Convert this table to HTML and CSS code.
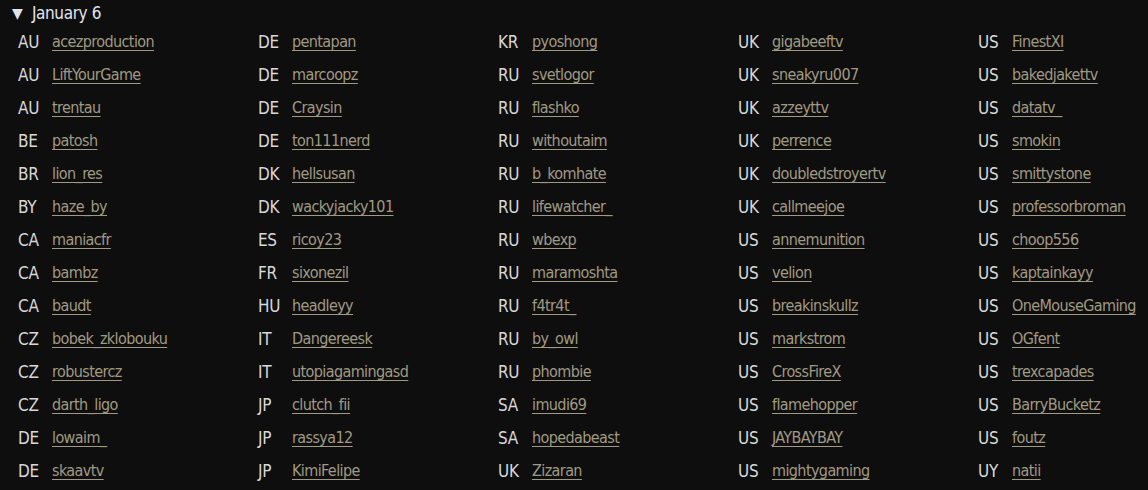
FILE: index.html
```html
<!DOCTYPE html>
<html>
<head>
<meta charset="utf-8">
<link rel="stylesheet" href="styles.css">
</head>
<body>
<details class="day" open>
<summary class="day-title"><span class="caret">▼</span>January 6</summary>
<ul class="list">
<li><span class="cc">AU</span><a href="#">acezproduction</a></li>
<li><span class="cc">AU</span><a href="#">LiftYourGame</a></li>
<li><span class="cc">AU</span><a href="#">trentau</a></li>
<li><span class="cc">BE</span><a href="#">patosh</a></li>
<li><span class="cc">BR</span><a href="#">lion_res</a></li>
<li><span class="cc">BY</span><a href="#">haze_by</a></li>
<li><span class="cc">CA</span><a href="#">maniacfr</a></li>
<li><span class="cc">CA</span><a href="#">bambz</a></li>
<li><span class="cc">CA</span><a href="#">baudt</a></li>
<li><span class="cc">CZ</span><a href="#">bobek_zklobouku</a></li>
<li><span class="cc">CZ</span><a href="#">robustercz</a></li>
<li><span class="cc">CZ</span><a href="#">darth_ligo</a></li>
<li><span class="cc">DE</span><a href="#">lowaim_</a></li>
<li><span class="cc">DE</span><a href="#">skaavtv</a></li>
<li><span class="cc">DE</span><a href="#">pentapan</a></li>
<li><span class="cc">DE</span><a href="#">marcoopz</a></li>
<li><span class="cc">DE</span><a href="#">Craysin</a></li>
<li><span class="cc">DE</span><a href="#">ton111nerd</a></li>
<li><span class="cc">DK</span><a href="#">hellsusan</a></li>
<li><span class="cc">DK</span><a href="#">wackyjacky101</a></li>
<li><span class="cc">ES</span><a href="#">ricoy23</a></li>
<li><span class="cc">FR</span><a href="#">sixonezil</a></li>
<li><span class="cc">HU</span><a href="#">headleyy</a></li>
<li><span class="cc">IT</span><a href="#">Dangereesk</a></li>
<li><span class="cc">IT</span><a href="#">utopiagamingasd</a></li>
<li><span class="cc">JP</span><a href="#">clutch_fii</a></li>
<li><span class="cc">JP</span><a href="#">rassya12</a></li>
<li><span class="cc">JP</span><a href="#">KimiFelipe</a></li>
<li><span class="cc">KR</span><a href="#">pyoshong</a></li>
<li><span class="cc">RU</span><a href="#">svetlogor</a></li>
<li><span class="cc">RU</span><a href="#">flashko</a></li>
<li><span class="cc">RU</span><a href="#">withoutaim</a></li>
<li><span class="cc">RU</span><a href="#">b_komhate</a></li>
<li><span class="cc">RU</span><a href="#">lifewatcher_</a></li>
<li><span class="cc">RU</span><a href="#">wbexp</a></li>
<li><span class="cc">RU</span><a href="#">maramoshta</a></li>
<li><span class="cc">RU</span><a href="#">f4tr4t_</a></li>
<li><span class="cc">RU</span><a href="#">by_owl</a></li>
<li><span class="cc">RU</span><a href="#">phombie</a></li>
<li><span class="cc">SA</span><a href="#">imudi69</a></li>
<li><span class="cc">SA</span><a href="#">hopedabeast</a></li>
<li><span class="cc">UK</span><a href="#">Zizaran</a></li>
<li><span class="cc">UK</span><a href="#">gigabeeftv</a></li>
<li><span class="cc">UK</span><a href="#">sneakyru007</a></li>
<li><span class="cc">UK</span><a href="#">azzeyttv</a></li>
<li><span class="cc">UK</span><a href="#">perrence</a></li>
<li><span class="cc">UK</span><a href="#">doubledstroyertv</a></li>
<li><span class="cc">UK</span><a href="#">callmeejoe</a></li>
<li><span class="cc">US</span><a href="#">annemunition</a></li>
<li><span class="cc">US</span><a href="#">velion</a></li>
<li><span class="cc">US</span><a href="#">breakinskullz</a></li>
<li><span class="cc">US</span><a href="#">markstrom</a></li>
<li><span class="cc">US</span><a href="#">CrossFireX</a></li>
<li><span class="cc">US</span><a href="#">flamehopper</a></li>
<li><span class="cc">US</span><a href="#">JAYBAYBAY</a></li>
<li><span class="cc">US</span><a href="#">mightygaming</a></li>
<li><span class="cc">US</span><a href="#">FinestXI</a></li>
<li><span class="cc">US</span><a href="#">bakedjakettv</a></li>
<li><span class="cc">US</span><a href="#">datatv_</a></li>
<li><span class="cc">US</span><a href="#">smokin</a></li>
<li><span class="cc">US</span><a href="#">smittystone</a></li>
<li><span class="cc">US</span><a href="#">professorbroman</a></li>
<li><span class="cc">US</span><a href="#">choop556</a></li>
<li><span class="cc">US</span><a href="#">kaptainkayy</a></li>
<li><span class="cc">US</span><a href="#">OneMouseGaming</a></li>
<li><span class="cc">US</span><a href="#">OGfent</a></li>
<li><span class="cc">US</span><a href="#">trexcapades</a></li>
<li><span class="cc">US</span><a href="#">BarryBucketz</a></li>
<li><span class="cc">US</span><a href="#">foutz</a></li>
<li><span class="cc">UY</span><a href="#">natii</a></li>
</ul>
</details>
</body>
</html>
```

FILE: styles.css
```css
html, body {
  margin: 0;
  padding: 0;
  background: #0f0e0e;
}
body {
  font-family: "Liberation Sans Narrow", "DejaVu Sans Condensed", "Liberation Sans", sans-serif;
  font-stretch: condensed;
  font-size: 16px;
  letter-spacing: -0.6px;
  color: #d6d6d6;
  width: 1148px;
  height: 490px;
  overflow: hidden;
}
.day-title {
  list-style: none;
  display: flex;
  align-items: center;
  height: 26px;
  padding-left: 12px;
  color: #e2e4ec;
  font-size: 17px;
  letter-spacing: -0.4px;
  cursor: pointer;
}
.day-title::-webkit-details-marker { display: none; }
.caret {
  font-size: 14px;
  width: 20px;
  font-family: "DejaVu Sans", sans-serif;
  font-stretch: normal;
  letter-spacing: 0;
}
.list {
  list-style: none;
  margin: -1px 0 0 0;
  padding: 0 0 0 18px;
  display: grid;
  grid-template-columns: repeat(4, 240px) 1fr;
  grid-template-rows: repeat(14, 33px);
  grid-auto-flow: column;
}
.list li {
  display: flex;
  align-items: center;
  min-width: 0;
}
.cc {
  flex: none;
  width: 34px;
  color: #d8d8d8;
  font-size: 17px;
  letter-spacing: -0.3px;
}
.list a {
  color: #a09a82;
  text-decoration: underline;
  text-underline-offset: 3px;
  white-space: nowrap;
}
```
